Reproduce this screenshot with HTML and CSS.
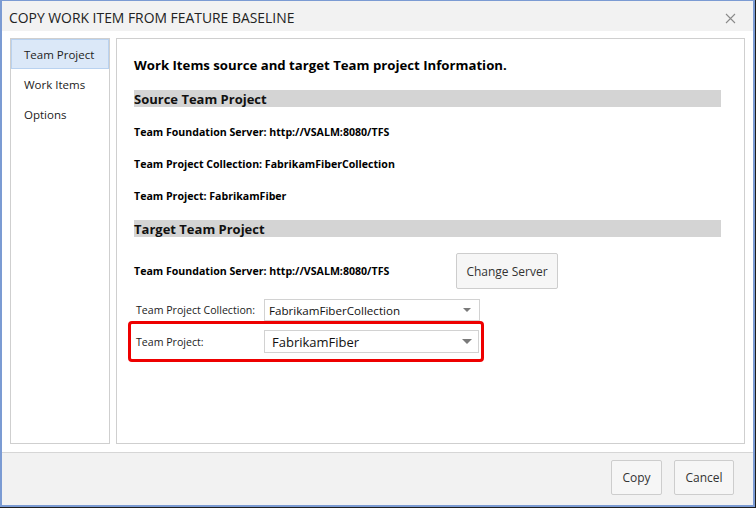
FILE: index.html
```html
<!DOCTYPE html>
<html>
<head>
<meta charset="utf-8">
<link rel="stylesheet" href="styles.css">
</head>
<body>
<div class="frame">
  <div class="window">
    <div class="titlebar">
      <span class="title">COPY WORK ITEM FROM FEATURE BASELINE</span>
      <svg class="close" width="11" height="11" viewBox="0 0 11 11"><path d="M1 1L10 10M10 1L1 10" stroke="#8a8a8a" stroke-width="1.1" fill="none"/></svg>
    </div>
    <div class="body">
      <nav class="nav">
        <div class="nav-item selected">Team Project</div>
        <div class="nav-item">Work Items</div>
        <div class="nav-item">Options</div>
      </nav>
      <main class="panel">
        <h1 class="heading">Work Items source and target Team project Information.</h1>
        <div class="section-bar">Source Team Project</div>
        <div class="info first">Team Foundation Server: http://VSALM:8080/TFS</div>
        <div class="info">Team Project Collection: FabrikamFiberCollection</div>
        <div class="info">Team Project: FabrikamFiber</div>
        <div class="section-bar second">Target Team Project</div>
        <div class="server-row">
          <div class="info server-text">Team Foundation Server: http://VSALM:8080/TFS</div>
          <button class="btn change">Change Server</button>
        </div>
        <div class="field-row collection">
          <span class="label">Team Project Collection:</span>
          <div class="select small"><span>FabrikamFiberCollection</span><i class="arrow"></i></div>
        </div>
        <div class="highlight">
          <div class="field-row">
            <span class="label">Team Project:</span>
            <div class="select large"><span>FabrikamFiber</span><i class="arrow big"></i></div>
          </div>
        </div>
      </main>
    </div>
    <footer class="footer">
      <button class="btn copy">Copy</button>
      <button class="btn cancel">Cancel</button>
    </footer>
  </div>
</div>
</body>
</html>
```
FILE: styles.css
```css
html, body {
  margin: 0;
  padding: 0;
  background: #ffffff;
}
body {
  font-family: "Open Sans", "Noto Sans", sans-serif;
  color: #222;
}
.frame {
  width: 756px;
  height: 508px;
  box-sizing: border-box;
  border-right: 1px solid #1e1e1e;
  border-bottom: 1px solid #1e1e1e;
}
.window {
  height: 100%;
  box-sizing: border-box;
  border-style: solid;
  border-color: #7b9bd3;
  border-width: 1px 2px 2px 2px;
  display: flex;
  flex-direction: column;
  background: #fff;
}
.titlebar {
  height: 30px;
  flex: none;
  background: #f2f2f2;
  display: flex;
  align-items: center;
  justify-content: space-between;
  padding: 0 17px 0 7px;
}
.title {
  font-size: 13.9px;
  color: #222;
  margin-top: 2px;
}
.close {
  margin-top: 5px;
}
.body {
  flex: 1;
  display: flex;
  gap: 6px;
  padding: 7px 8px 8px 8px;
  background: #fff;
}
.nav {
  width: 100px;
  box-sizing: border-box;
  border: 1px solid #cfcfcf;
  flex: none;
}
.nav-item {
  height: 30px;
  line-height: 28px;
  padding-top: 2px;
  padding-left: 13px;
  font-size: 11.5px;
  color: #222;
  box-sizing: border-box;
}
.nav-item.selected {
  background: #dbe8f8;
  border: 1px solid #b9d2f0;
  padding-left: 12px;
  padding-top: 1px;
  line-height: 28px;
}
.panel {
  flex: 1;
  border: 1px solid #cfcfcf;
  padding: 0 23px 0 17px;
  box-sizing: border-box;
}
.heading {
  font-size: 13.2px;
  font-weight: 700;
  color: #000;
  margin: 16px 0 0 0;
  line-height: 20px;
}
.section-bar {
  margin-top: 15px;
  background: #d4d4d4;
  height: 17px;
  line-height: 18px;
  font-size: 13px;
  font-weight: 700;
  color: #111;
}
.section-bar.second {
  margin-top: 16px;
}
.info {
  font-size: 10.6px;
  font-weight: 700;
  color: #000;
  line-height: 16px;
  margin-top: 16px;
}
.info.first {
  margin-top: 17px;
}
.server-row {
  display: flex;
  align-items: center;
  margin-top: 16px;
}
.server-text {
  margin-top: 0;
  width: 322px;
  flex: none;
}
.btn {
  font-family: "Open Sans", "Noto Sans", sans-serif;
  font-size: 12px;
  color: #333;
  background: #f6f6f6;
  border: 1px solid #cdcdcd;
  border-radius: 2px;
  padding: 0;
  box-sizing: border-box;
}
.btn.change {
  width: 102px;
  height: 36px;
}
.field-row {
  display: flex;
  align-items: center;
}
.field-row.collection {
  margin-top: 10px;
}
.label {
  width: 130px;
  flex: none;
  box-sizing: border-box;
  padding-left: 2px;
  font-size: 10.6px;
  color: #222;
}
.highlight .label {
  width: 128px;
  padding-left: 0;
}
.select {
  width: 216px;
  box-sizing: border-box;
  border: 1px solid #d2d2d2;
  background: #fff;
  display: flex;
  align-items: center;
  justify-content: space-between;
  color: #111;
}
.select.small {
  height: 22px;
  padding: 0 8px 0 4px;
  font-size: 11.6px;
}
.select.large {
  height: 23px;
  padding: 0 6px 0 7px;
  font-size: 13px;
}
.arrow {
  width: 0;
  height: 0;
  border-left: 4px solid transparent;
  border-right: 4px solid transparent;
  border-top: 4px solid #7a7a7a;
}
.arrow.big {
  border-left-width: 5px;
  border-right-width: 5px;
  border-top-width: 5px;
}
.highlight {
  margin-left: -6px;
  width: 356px;
  box-sizing: border-box;
  border: 3px solid #ee0000;
  border-radius: 4px;
  padding: 6px 2px 6px 5px;
}
.footer {
  flex: none;
  height: 53px;
  box-sizing: border-box;
  background: #f2f2f2;
  border-top: 1px solid #d6d6d6;
  display: flex;
  justify-content: flex-end;
  align-items: flex-start;
  gap: 12px;
  padding: 7px 19px 0 0;
}
.btn.copy {
  width: 51px;
  height: 35px;
}
.btn.cancel {
  width: 60px;
  height: 35px;
}
```
